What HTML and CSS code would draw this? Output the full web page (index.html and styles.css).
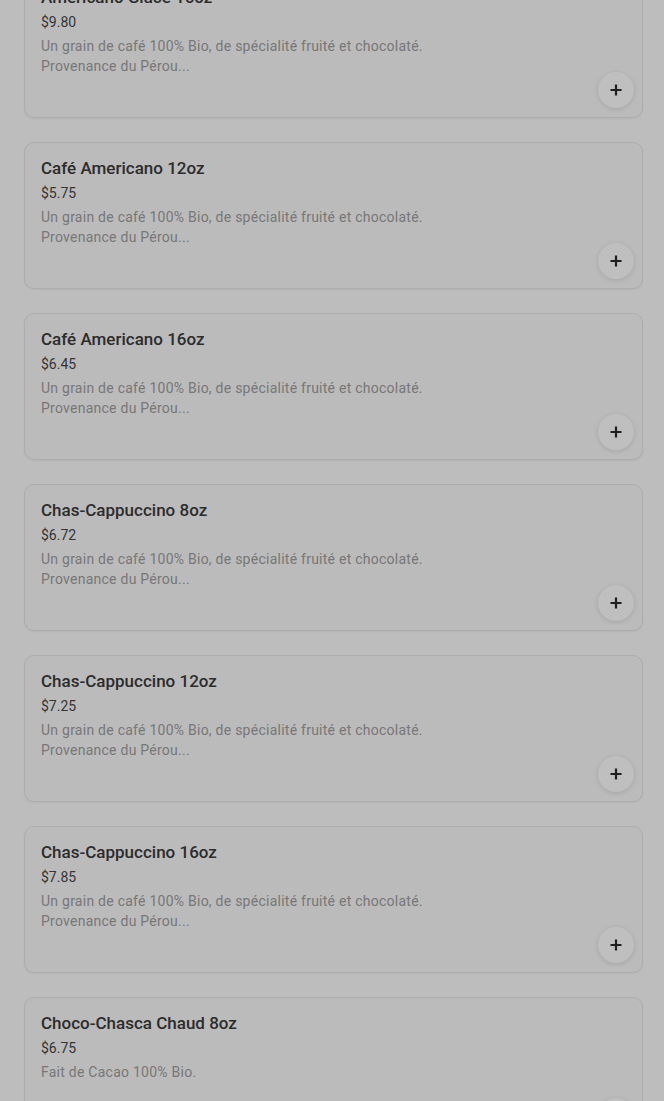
FILE: index.html
```html
<!DOCTYPE html>
<html lang="fr">
<head>
<meta charset="utf-8">
<link rel="stylesheet" href="styles.css">
</head>
<body>
<div class="list">
  <div class="card">
    <div class="title">Americano Glacé 16oz</div>
    <div class="price">$9.80</div>
    <div class="desc">Un grain de café 100% Bio, de spécialité fruité et chocolaté.<br>Provenance du Pérou...</div>
    <div class="foot"><button class="add"><svg viewBox="0 0 14 14" width="14" height="14"><path d="M7 1.5v11M1.5 7h11" stroke="#1f1f1f" stroke-width="2.2"/></svg></button></div>
  </div>
  <div class="card">
    <div class="title">Café Americano 12oz</div>
    <div class="price">$5.75</div>
    <div class="desc">Un grain de café 100% Bio, de spécialité fruité et chocolaté.<br>Provenance du Pérou...</div>
    <div class="foot"><button class="add"><svg viewBox="0 0 14 14" width="14" height="14"><path d="M7 1.5v11M1.5 7h11" stroke="#1f1f1f" stroke-width="2.2"/></svg></button></div>
  </div>
  <div class="card">
    <div class="title">Café Americano 16oz</div>
    <div class="price">$6.45</div>
    <div class="desc">Un grain de café 100% Bio, de spécialité fruité et chocolaté.<br>Provenance du Pérou...</div>
    <div class="foot"><button class="add"><svg viewBox="0 0 14 14" width="14" height="14"><path d="M7 1.5v11M1.5 7h11" stroke="#1f1f1f" stroke-width="2.2"/></svg></button></div>
  </div>
  <div class="card">
    <div class="title">Chas-Cappuccino 8oz</div>
    <div class="price">$6.72</div>
    <div class="desc">Un grain de café 100% Bio, de spécialité fruité et chocolaté.<br>Provenance du Pérou...</div>
    <div class="foot"><button class="add"><svg viewBox="0 0 14 14" width="14" height="14"><path d="M7 1.5v11M1.5 7h11" stroke="#1f1f1f" stroke-width="2.2"/></svg></button></div>
  </div>
  <div class="card">
    <div class="title">Chas-Cappuccino 12oz</div>
    <div class="price">$7.25</div>
    <div class="desc">Un grain de café 100% Bio, de spécialité fruité et chocolaté.<br>Provenance du Pérou...</div>
    <div class="foot"><button class="add"><svg viewBox="0 0 14 14" width="14" height="14"><path d="M7 1.5v11M1.5 7h11" stroke="#1f1f1f" stroke-width="2.2"/></svg></button></div>
  </div>
  <div class="card">
    <div class="title">Chas-Cappuccino 16oz</div>
    <div class="price">$7.85</div>
    <div class="desc">Un grain de café 100% Bio, de spécialité fruité et chocolaté.<br>Provenance du Pérou...</div>
    <div class="foot"><button class="add"><svg viewBox="0 0 14 14" width="14" height="14"><path d="M7 1.5v11M1.5 7h11" stroke="#1f1f1f" stroke-width="2.2"/></svg></button></div>
  </div>
  <div class="card">
    <div class="title">Choco-Chasca Chaud 8oz</div>
    <div class="price">$6.75</div>
    <div class="desc">Fait de Cacao 100% Bio.</div>
    <div class="foot"><button class="add"><svg viewBox="0 0 14 14" width="14" height="14"><path d="M7 1.5v11M1.5 7h11" stroke="#1f1f1f" stroke-width="2.2"/></svg></button></div>
  </div>
</div>
</body>
</html>
```
FILE: styles.css
```css
html, body {
  margin: 0;
  padding: 0;
  background: #bdbdbd;
  overflow: hidden;
  height: 1101px;
}
body {
  font-family: "Roboto", "Inter", sans-serif;
}
.list {
  display: flex;
  flex-direction: column;
  gap: 24px;
  padding: 0 21px 0 24px;
  margin-top: -29px;
}
.card {
  display: flex;
  flex-direction: column;
  box-sizing: border-box;
  min-height: 147px;
  border: 1px solid #adadad;
  border-radius: 10px;
  background: #bbbbbb;
  padding: 15px 16px 9px 16px;
  box-shadow: 0 1px 2px rgba(0,0,0,0.05);
}
.title {
  font-size: 17px;
  line-height: 20px;
  font-weight: 500;
  color: #2c2c2c;
}
.price {
  margin-top: 5px;
  font-size: 14px;
  line-height: 20px;
  color: #353535;
}
.desc {
  margin-top: 4px;
  font-size: 14px;
  line-height: 20px;
  letter-spacing: 0.25px;
  color: #777777;
}
.foot {
  display: flex;
  justify-content: flex-end;
  margin-top: auto;
  margin-right: -8px;
}
.desc + .foot {
  padding-top: 0;
}
.add {
  margin-top: -4px;
  width: 36px;
  height: 36px;
  border-radius: 50%;
  border: none;
  background: #bfbfbf;
  box-shadow: 0 1px 5px rgba(0,0,0,0.12);
  display: flex;
  align-items: center;
  justify-content: center;
  padding: 0;
}
```
